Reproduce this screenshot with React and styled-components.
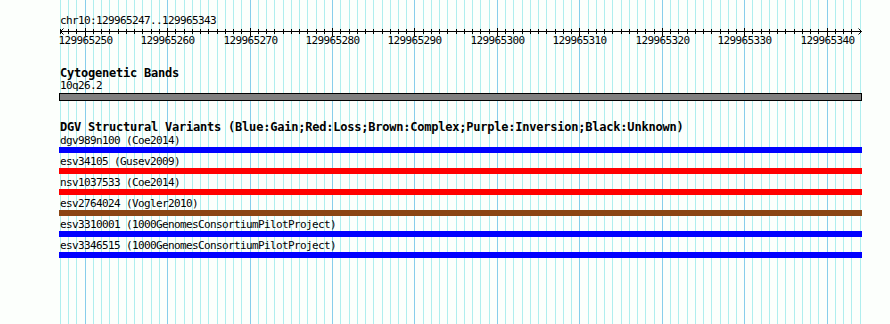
import React from "react";
import styled, { createGlobalStyle } from "styled-components";

const GlobalStyle = createGlobalStyle`
  html, body {
    margin: 0;
    padding: 0;
    background: #fcfffc;
  }
`;

const START = 129965247;
const END = 129965343;
const LINE_COUNT = 98;
const PX_PER_BP = 8.244;
const LEFT = 60;
const RIGHT = 862;
const HEIGHT = 324;

const lineX = (i) => LEFT + Math.round(i * PX_PER_BP) + 0.5;
const isMajor = (i) => (START + i) % 10 === 0;

const variants = [
  { id: "dgv989n100", study: "Coe2014", color: "#0000ff" },
  { id: "esv34105", study: "Gusev2009", color: "#ff0000" },
  { id: "nsv1037533", study: "Coe2014", color: "#ff0000" },
  { id: "esv2764024", study: "Vogler2010", color: "#8b4513" },
  { id: "esv3310001", study: "1000GenomesConsortiumPilotProject", color: "#0000ff" },
  { id: "esv3346515", study: "1000GenomesConsortiumPilotProject", color: "#0000ff" },
];

const Canvas = styled.div`
  position: relative;
  width: 890px;
  height: ${HEIGHT}px;
  overflow: hidden;
  background: #fcfffc;
  color: #000;
`;

const GridLayer = styled.svg`
  position: absolute;
  left: 0;
  top: 0;
  width: 890px;
  height: ${HEIGHT}px;
  z-index: 0;
`;

const Content = styled.div`
  position: relative;
  z-index: 1;
  display: flex;
  flex-direction: column;
  width: ${RIGHT - 59}px;
  padding-left: 59px;
`;

const SmallText = styled.div`
  font-family: "DejaVu Sans Mono", "Liberation Mono", monospace;
  font-size: 11px;
  letter-spacing: -0.62px;
  line-height: 12px;
  height: 12px;
  white-space: pre;
  padding-left: 1px;
  margin-top: ${(p) => p.$gap || 0}px;
`;

const TrackTitle = styled.div`
  font-family: "DejaVu Sans Mono", "Liberation Mono", monospace;
  font-weight: bold;
  font-size: 12px;
  letter-spacing: -0.22px;
  line-height: 13px;
  height: 13px;
  white-space: pre;
  padding-left: 1px;
  margin-top: ${(p) => p.$gap || 0}px;
`;

const RulerSvg = styled.svg`
  display: block;
  width: ${RIGHT - 59}px;
  height: 20px;
`;

const BandBar = styled.div`
  box-sizing: border-box;
  height: 8px;
  margin-top: 1px;
  background: #808080;
  border: 1px solid #000;
`;

const VariantRow = styled.div`
  display: flex;
  flex-direction: column;
  padding-top: 1px;
  padding-bottom: 2px;
`;

const VariantBar = styled.div`
  height: 6px;
  background: ${(p) => p.$color};
`;

function Grid() {
  const lines = [];
  for (let i = 0; i < LINE_COUNT; i++) {
    const x = lineX(i);
    lines.push(
      <line
        key={i}
        x1={x}
        x2={x}
        y1={0}
        y2={HEIGHT}
        stroke={isMajor(i) ? "#87ceeb" : "#afeeee"}
        strokeWidth={1}
      />
    );
  }
  return <GridLayer>{lines}</GridLayer>;
}

function Ruler() {
  // svg starts at x=59, y=27
  const off = 59;
  const y = 4.5;
  const ticks = [];
  const labels = [];
  for (let i = 0; i < LINE_COUNT - 1; i++) {
    const x = lineX(i) - off;
    const major = isMajor(i);
    ticks.push(
      <line
        key={i}
        x1={x}
        x2={x}
        y1={major ? 1 : 2}
        y2={major ? 9 : 7}
        stroke="#000"
        strokeWidth={1}
      />
    );
    if (major) {
      labels.push(
        <text
          key={"l" + i}
          x={x}
          y={16.5}
          textAnchor="middle"
          fontFamily="'DejaVu Sans Mono', 'Liberation Mono', monospace"
          fontSize="11"
          letterSpacing="-0.62"
          fill="#000"
        >
          {START + i}
        </text>
      );
    }
  }
  const x0 = LEFT - off + 0.5;
  const x1 = RIGHT - off - 0.5;
  return (
    <RulerSvg>
      <line x1={x0} x2={x1} y1={y} y2={y} stroke="#000" strokeWidth={1} />
      <polyline
        points={`${x0 + 3},${y - 3} ${x0},${y} ${x0 + 3},${y + 3}`}
        fill="none"
        stroke="#000"
        strokeWidth={1}
      />
      <polyline
        points={`${x1 - 3},${y - 3} ${x1},${y} ${x1 - 3},${y + 3}`}
        fill="none"
        stroke="#000"
        strokeWidth={1}
      />
      {ticks}
      {labels}
    </RulerSvg>
  );
}

export default function App() {
  return (
    <>
      <GlobalStyle />
      <Canvas>
        <Grid />
        <Content>
          <SmallText $gap={15}>{`chr10:${START}..${END}`}</SmallText>
          <Ruler />
          <TrackTitle $gap={20}>Cytogenetic Bands</TrackTitle>
          <SmallText>10q26.2</SmallText>
          <BandBar />
          <TrackTitle $gap={20}>
            DGV Structural Variants (Blue:Gain;Red:Loss;Brown:Complex;Purple:Inversion;Black:Unknown)
          </TrackTitle>
          {variants.map((v) => (
            <VariantRow key={v.id}>
              <SmallText>{`${v.id} (${v.study})`}</SmallText>
              <VariantBar $color={v.color} />
            </VariantRow>
          ))}
        </Content>
      </Canvas>
    </>
  );
}
